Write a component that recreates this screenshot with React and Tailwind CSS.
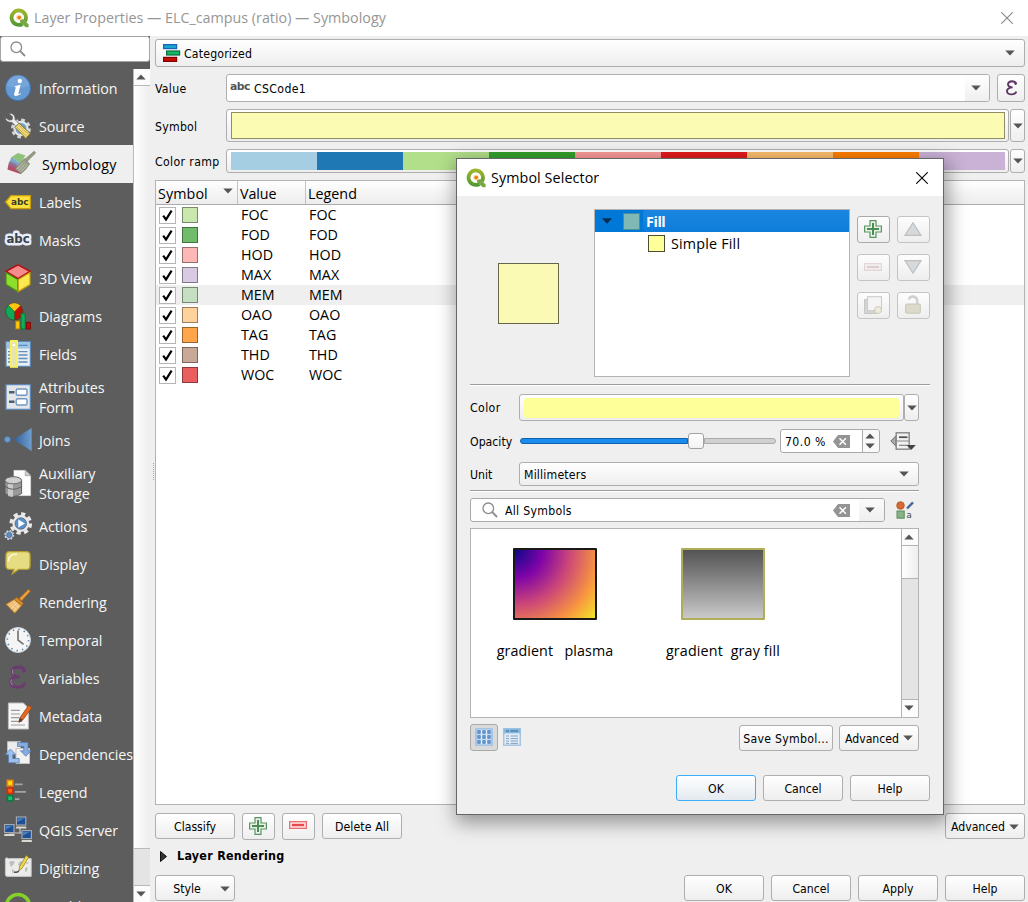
import React from "react";

const BTN = "border border-[#aeaeae] rounded-[3px] bg-gradient-to-b from-white to-[#eeeeee]";

function Arrow({ up, className = "" }) {
  return (
    <svg width="10" height="6" viewBox="0 0 10 6" className={"shrink-0 " + className}>
      <path d={up ? "M0.3 5.5 L5 0.5 L9.7 5.5 Z" : "M0.3 0.5 L5 5.5 L9.7 0.5 Z"} fill="#555" />
    </svg>
  );
}

function Button({ children, className = "w-20", primary }) {
  const look = primary
    ? "border border-[#3daefd] rounded-[3px] bg-gradient-to-b from-white to-[#e4eaf0]"
    : BTN;
  return (
    <button className={"flex h-[26px] shrink-0 items-center justify-center pt-[3px] whitespace-nowrap " + look + " " + className}>
      {children}
    </button>
  );
}

function DropButton({ className }) {
  return (
    <div className={"flex w-[15px] shrink-0 items-center justify-center " + BTN + " " + className}>
      <Arrow />
    </div>
  );
}

function QLogo() {
  return (
    <svg width="20" height="20" viewBox="0 0 20 20" className="shrink-0">
      <defs>
        <linearGradient id="qg" x1="0" y1="0" x2="0" y2="1">
          <stop offset="0" stopColor="#9cb62c" />
          <stop offset="1" stopColor="#539a33" />
        </linearGradient>
      </defs>
      <path d="M10 2.3a7.3 7.3 0 1 0 3.4 13.7M16 13.2A7.3 7.3 0 0 0 10 2.3" fill="none" stroke="url(#qg)" strokeWidth="3.8" />
      <path d="M11 11.2h3.6l5 5.2v2.8h-2.9l-5.7-5.3z" fill="#76a843" />
      <circle cx="10" cy="9.6" r="3" fill="#fadfb0" />
      <circle cx="10.2" cy="9.6" r="1.8" fill="#ee7913" />
    </svg>
  );
}

function Magnifier() {
  return (
    <svg width="16" height="16" viewBox="0 0 16 16" fill="none" stroke="#8c8c8c" className="shrink-0">
      <circle cx="6.3" cy="6.3" r="5.3" strokeWidth="1.3" />
      <path d="M10.2 10.2 L15 15" strokeWidth="1.9" />
    </svg>
  );
}

function PlusIcon() {
  return (
    <svg width="18" height="18" viewBox="0 0 18 18">
      <path d="M6 .6h6V6h5.4v6H12v5.4H6V12H.6V6H6z" fill="#e8f2e8" stroke="#5a9560" strokeWidth="1.2" />
      <path d="M9 3v12M3 9h12" stroke="#4c8c50" strokeWidth="2" />
    </svg>
  );
}

function MinusIcon({ faded }) {
  return (
    <svg width="18" height="8" viewBox="0 0 18 8" className={faded ? "opacity-25 grayscale-[60%]" : ""}>
      <rect x=".6" y=".6" width="16.8" height="6.8" fill="#fbd9d9" stroke="#ef6a6d" strokeWidth="1.2" />
      <path d="M3 4h12" stroke="#e8474c" strokeWidth="2.2" />
    </svg>
  );
}

function ClearIcon() {
  return (
    <svg width="17" height="13" viewBox="0 0 17 13" className="shrink-0">
      <path d="M5 0h12v13H5L0 6.5z" fill="#949494" />
      <path d="M6.5 3.2l6.4 6.6M12.9 3.2L6.5 9.8" stroke="#fff" strokeWidth="1.5" />
    </svg>
  );
}

function Gear({ cx, cy, r, fill = "#e9e9e9" }) {
  return (
    <g>
      <circle cx={cx} cy={cy} r={r} fill="none" stroke={fill} strokeWidth={r * 0.36} strokeDasharray={`${r * 0.43} ${r * 0.355}`} />
      <circle cx={cx} cy={cy} r={r * 0.88} fill={fill} />
      <circle cx={cx} cy={cy} r={r * 0.6} fill="#5b8fcc" stroke="#566573" strokeWidth=".8" />
    </g>
  );
}

const icons = {
  info: (
    <>
      <circle cx="14" cy="14" r="12.7" fill="#659ad2" stroke="#3f6fab" />
      <path d="M3 12a11 11 0 0 1 22 0q-10 4-22 0z" fill="#88b2df" opacity=".5" />
      <circle cx="15.8" cy="7" r="2.2" fill="#fff" />
      <path d="M10.4 12.6q3-1.2 6.2-1.8l-2.2 8.6q-.2 1.3 2.2-.3l.2.8q-6 4-6.7.6 0-.8 1.7-7z" fill="#fff" />
    </>
  ),
  source: (
    <>
      <circle cx="17" cy="16.5" r="8.6" fill="none" stroke="#d5d8da" strokeWidth="2.6" strokeDasharray="3.6 3.15" />
      <circle cx="17" cy="16.5" r="6.6" fill="#6fa0d0" stroke="#e4e4e4" strokeWidth="2.2" />
      <path d="M4.6 1.2l4 3.6-.5 2.9-3 .4-3.9-2.6Q1.8 10.8 8 10.4l4.4 4.6 3-3-4.2-4.2Q11.4.6 4.6 1.2z" fill="#ececec" stroke="#5b5b5b" strokeWidth=".7" />
      <path d="M11 15.4l4-4.2 11.2 10.2-4.2 5z" fill="#f0da80" stroke="#8a7426" />
      <path d="M13.2 15.4l9.6 9M15 13.4l9.6 9" stroke="#c7a942" strokeWidth=".9" />
    </>
  ),
  symbology: (
    <>
      <path d="M4.5 7L11 3l7.5 2.6-5 8z" fill="#8fc27c" />
      <path d="M4.5 7l9 6.6-2 3L2 13z" fill="#7fa9c8" />
      <path d="M2 12.4l9.6 4 3.6 6.2L13.5 24 .4 19.6z" fill="#b34f68" />
      <path d="M2.6 11l7.5 3-2 3.8L1.4 16z" fill="#8d6f9c" opacity=".7" />
      <path d="M27.2 1.3L17.8 9.5l2.2 2L28.5 3z" fill="#9a9d86" stroke="#77795f" strokeWidth=".7" />
      <path d="M17.4 8.8l5.2 5-4 5.7-4.6 4L8 18.6l4.4-4.3z" fill="#9ba08c" stroke="#7c806f" strokeWidth=".8" />
      <path d="M15.4 12.7l-5.5 6.6M17.8 14l-6 7M20.5 14.8l-6.5 7" stroke="#c3c6b5" strokeWidth=".8" />
    </>
  ),
  labels: (
    <>
      <path d="M7 7.6h19.4v13H7L1.6 14z" fill="#fbdf3a" stroke="#c89f0e" strokeWidth="1.3" />
      <text x="15.8" y="17.4" textAnchor="middle" fontFamily="DejaVu Sans" fontWeight="700" fontSize="9.3" textLength="17.5" lengthAdjust="spacingAndGlyphs" fill="#3b3a2c">abc</text>
    </>
  ),
  masks: (
    <text x="14" y="17" textAnchor="middle" fontFamily="DejaVu Sans" fontWeight="700" fontSize="12.5" textLength="23" lengthAdjust="spacingAndGlyphs" fill="#3b4248" stroke="#e8edfb" strokeWidth="5" strokeLinejoin="round" paintOrder="stroke">abc</text>
  ),
  view3d: (
    <>
      <path d="M14 .8L26 7.4 14 14.6 2 7.4z" fill="#f58b8b" stroke="#b30d12" strokeWidth="1.5" />
      <path d="M2 8.6l11.6 7v12L2 20.6z" fill="#8be02c" stroke="#4c8a13" strokeWidth="1.2" />
      <path d="M26 8.6l-11.8 7v12L26 20.6z" fill="#fce94f" stroke="#c39d12" strokeWidth="1.2" />
    </>
  ),
  diagrams: (
    <>
      <circle cx="10.4" cy="9.6" r="8.4" fill="#c40d02" stroke="#4a3a1a" strokeWidth=".9" />
      <path d="M10.4 9.6L4.4 3.6a8.4 8.4 0 0 1 12 0z" fill="#fdc60a" />
      <path d="M10.4 9.6l-6-6a8.4 8.4 0 0 0 6 14.4z" fill="#0fa958" stroke="#0a6b38" strokeWidth=".6" />
      <rect x="11.6" y="19" width="4.2" height="8" fill="#fdc60a" stroke="#a97b08" />
      <rect x="17" y="11.6" width="4.2" height="15.4" fill="#12ab59" stroke="#08753b" />
      <rect x="22.4" y="20.4" width="4" height="6.6" fill="#c40d02" stroke="#7b0a0a" />
    </>
  ),
  fields: (
    <>
      <rect x="2" y="1.6" width="24.4" height="24.8" fill="#eceff1" stroke="#5d87b4" strokeWidth="1.3" />
      <rect x="2.6" y="2.2" width="23.2" height="6.4" fill="#9cc4e4" />
      <path d="M14.5 5.3h9M14.5 11.6h9M14.5 15h9M14.5 18.5h9M14.5 22h9M4 11.6h2M4 15h2M4 18.5h2M4 22h2" stroke="#5f8fbd" strokeWidth="1.3" />
      <rect x="6.9" y=".9" width="6.2" height="26" fill="#e8e3b5" stroke="#f8f25a" strokeWidth="1.8" />
      <circle cx="10" cy="5" r="1.3" fill="#fff" />
    </>
  ),
  form: (
    <>
      <rect x="2" y="1.6" width="24.4" height="24.8" fill="#e4e6e8" stroke="#5d87b4" strokeWidth="1.3" />
      <path d="M5 9.2h5.5M5 18.8h5.5" stroke="#4b5d70" strokeWidth="2.6" />
      <rect x="12.2" y="6" width="10.8" height="6.2" rx="1.5" fill="#fff" stroke="#7097c2" strokeWidth="1.4" />
      <rect x="12.2" y="15.8" width="10.8" height="6.2" rx="1.5" fill="#fff" stroke="#7097c2" strokeWidth="1.4" />
    </>
  ),
  joins: (
    <>
      <defs>
        <linearGradient id="jg"><stop offset="0" stopColor="#2f5f98" /><stop offset="1" stopColor="#6f9fd0" /></linearGradient>
      </defs>
      <circle cx="3.4" cy="13.4" r="3" fill="#6c9ccf" stroke="#4673a5" strokeWidth=".7" />
      <path d="M27.6 2v23L9.6 13.4z" fill="url(#jg)" />
    </>
  ),
  storage: (
    <>
      <path d="M9.5 1h12l5.5 5.4V27h-17.5z" fill="#fdfdfd" stroke="#777" strokeWidth=".6" />
      <path d="M21.3 1v5.7H27z" fill="#d0d0d0" stroke="#777" strokeWidth=".5" />
      <path d="M1 11.5v13q8 6 16.6 0v-13z" fill="#999" stroke="#5e5e5e" />
      <path d="M4 12v15q3 1 5 1V12z" fill="#d6d6d6" opacity=".8" />
      <path d="M1 17.5q8.3 5.6 16.6 0" fill="none" stroke="#606060" />
      <ellipse cx="9.3" cy="11.3" rx="8.3" ry="3.6" fill="#cfcfcf" stroke="#666" />
    </>
  ),
  actions: (
    <>
      <Gear cx={16.8} cy={11.5} r={9.6} />
      <path d="M14.3 7.5l6.6 4-6.6 4z" fill="#fff" />
      <Gear cx={5.2} cy={23} r={4.2} fill="#c4d6e8" />
    </>
  ),
  display: (
    <>
      <path d="M5.5 1.6h17q3.6 0 3.6 4v9.8q0 4-3.6 4h-8l-6.2 4.4 1.6-4.4H5.5q-3.6 0-3.6-4V5.6q0-4 3.6-4z" fill="#e6dc82" stroke="#b49e2f" strokeWidth="1.3" />
      <path d="M4.4 11.5Q4 4.4 13 4" fill="none" stroke="#fcf9dc" strokeWidth="1.7" />
    </>
  ),
  rendering: (
    <>
      <path d="M24.4 1.4l2 1.7-8.8 9.8-2.5-2.3z" fill="#eca040" stroke="#b26d15" />
      <path d="M12.8 9.4l6.6 6-1.8 2.2-7.4-6.3z" fill="#d98d29" stroke="#a8640f" strokeWidth=".8" />
      <path d="M10.2 11.4l7.4 6.3-6.8 7.5-8.8-8.9z" fill="#edbd74" stroke="#b17322" />
      <path d="M6 16l6.5 6M8.5 13.5l6.5 6M13 14.6l-6.2 6.6M15.4 17L9.5 23.4" stroke="#fbe0b0" strokeWidth=".7" />
    </>
  ),
  temporal: (
    <>
      <circle cx="14" cy="14" r="12.5" fill="#f5f5f5" stroke="#d1d6da" />
      <circle cx="14" cy="14" r="10.6" fill="none" stroke="#5b88b8" strokeWidth="1.6" strokeDasharray="1.4 4.15" />
      <path d="M14 4.6V14l5.6 4.4" fill="none" stroke="#777" strokeWidth="1.7" />
    </>
  ),
  variables: (
    <>
      <path d="M20.6 6.6Q19 3 14.6 3 8 3.4 8.2 8q.4 4.4 7.2 4.8Q6.4 13 6.4 18.2q.4 5 7.6 5 5 0 7-4.4" fill="none" stroke="#6a3a71" strokeWidth="2.8" />
      <circle cx="20" cy="6.8" r="1.9" fill="#6a3a71" />
      <path d="M9 5.2Q7.6 8 9.4 10.4M7.4 15.4Q5.6 19 8.6 21.4" fill="none" stroke="#a883ae" strokeWidth="1" />
    </>
  ),
  metadata: (
    <>
      <path d="M4.4 1h15l5 5v21h-20z" fill="#f6f6f6" stroke="#c0c0c0" />
      <path d="M7 8.3h9M7 12h9M7 15.6h8M7 19.4h11M7 23h14" stroke="#9c9c9c" strokeWidth="1.2" />
      <path d="M24.7 3.2l3 2.6-9 12.3-3.8 2.3 1-4.6z" fill="#e06a24" stroke="#a23f0b" strokeWidth=".8" />
      <path d="M16 15.8l2.6 2.2-3.7 2.4z" fill="#4b3b33" />
    </>
  ),
  dependencies: (
    <>
      <path d="M3.5 1.6h13v13h-13z" fill="#ececec" stroke="#bcbcbc" />
      <path d="M12 8.5h13.5v15H12z" fill="#f1f1f1" stroke="#c3c3c3" />
      <path d="M13.5 2.5H24v8.3h3l-5.2 5.5-5.4-5.5h3.3V6.5h-6.2z" fill="#85abdf" stroke="#4e7cba" strokeWidth=".7" />
      <path d="M15.2 22.8H4.5v-8.3H1.2L6.4 9l5.4 5.5h-3v4h6.4z" fill="#9dbfe9" stroke="#4e7cba" strokeWidth=".7" />
    </>
  ),
  legend: (
    <>
      <rect x="3.4" y="2.4" width="5.4" height="5.4" fill="#fcdc12" stroke="#f28b0b" strokeWidth="1.6" />
      <rect x="3.4" y="10" width="5.4" height="5.4" fill="#ff6412" stroke="#d62b04" strokeWidth="1.6" />
      <rect x="3.4" y="17.6" width="5.4" height="5.2" fill="#1ac06b" stroke="#087e3f" strokeWidth="1.6" />
      <path d="M11 6.3h7.6M11 13.8h11M11 21.2h4.4" stroke="#a4a4a4" strokeWidth="1.8" />
    </>
  ),
  server: (
    <>
      <path d="M5 17h21M16 11v6" stroke="#c8c8c8" strokeWidth="1.2" />
      {[[12.4, 1], [0.6, 8.6], [18, 14.6]].map(([x, y]) => (
        <g key={x}>
          <rect x={x} y={y} width="9.4" height="8" fill="#1f4f96" stroke="#a9aeb4" strokeWidth="1.1" />
          <path d={`M${x + 1} ${y + 1.2}h7l-7 4z`} fill="#4a7dbb" />
          <path d={`M${x} ${y + 9.4}h9.6l.6 2h-10.8z`} fill="#d9d9d2" />
        </g>
      ))}
    </>
  ),
  digitizing: (
    <>
      <path d="M1.4 4.6q1.6-1.5 3 0h22.8v17.8H4q-2.6.6-2.6-2z" fill="#ececea" stroke="#c7c7c7" />
      <path d="M5 8q4-2 6 0l-2 3-2 2zM8 15l2 1-1 4-1-2zM15 8l3-1 1 3-3 3-2-2zM21 14l3-1-1 4-2 1zM22 8l3 .5-2 2z" fill="#bdbfbd" />
      <path d="M22.2 1.6l2.4 1.7-6.6 11-3 2 .6-3.6z" fill="#f0d94f" stroke="#9a8620" strokeWidth=".8" />
      <path d="M10 18q4 1 5-1.6" fill="none" stroke="#4a4a4a" strokeWidth="1.4" />
    </>
  ),
  qfield: <circle cx="14" cy="14" r="11.5" fill="none" stroke="#86d02c" strokeWidth="3.6" />,
};

const menu = [
  ["info", "Information"],
  ["source", "Source"],
  ["symbology", "Symbology"],
  ["labels", "Labels"],
  ["masks", "Masks"],
  ["view3d", "3D View"],
  ["diagrams", "Diagrams"],
  ["fields", "Fields"],
  ["form", "Attributes Form"],
  ["joins", "Joins"],
  ["storage", "Auxiliary Storage"],
  ["actions", "Actions"],
  ["display", "Display"],
  ["rendering", "Rendering"],
  ["temporal", "Temporal"],
  ["variables", "Variables"],
  ["metadata", "Metadata"],
  ["dependencies", "Dependencies"],
  ["legend", "Legend"],
  ["server", "QGIS Server"],
  ["digitizing", "Digitizing"],
  ["qfield", "QField"],
];

const UI = "font-['Open_Sans','Noto_Sans',sans-serif] text-[14.3px] [font-stretch:normal]";

function Sidebar() {
  return (
    <aside className="flex w-[150px] shrink-0 flex-col bg-[#5d5d5d]">
      <div className="flex h-[26px] shrink-0 items-center rounded-[3px] border border-[#a6a6a6] bg-white pl-[9px]">
        <Magnifier />
      </div>
      <div className="mt-[7px] flex min-h-0 flex-1">
        <nav className={"w-[133px] overflow-hidden text-[#f6f6f6] " + UI}>
          {menu.map(([icon, label]) => {
            const two = icon === "form" || icon === "storage";
            const on = icon === "symbology";
            return (
              <div
                key={icon}
                className={
                  "flex items-center gap-[7px] " +
                  (two ? "h-12 " : "h-[38px] ") +
                  (on ? "bg-[#efefef] pl-[7px] tracking-[0.22px] text-black" : "pl-1 tracking-[-0.07px]")
                }
              >
                <svg width="28" height="28" viewBox="0 0 28 28" className="shrink-0 overflow-visible">
                  {icons[icon]}
                </svg>
                <span className={"pt-0.5 leading-5 " + (two ? "w-20" : "whitespace-nowrap")}>{label}</span>
              </div>
            );
          })}
        </nav>
        <div className="flex w-[17px] flex-col border-l border-[#b9b9b9]">
          <div className="flex h-[17px] shrink-0 items-center justify-center border-b border-[#b9b9b9] bg-[#fcfcfc] pr-0.5">
            <Arrow up />
          </div>
          <div className="h-[763px] shrink-0 border-b border-[#b9b9b9] bg-gradient-to-r from-white to-[#ededed]" />
          <div className="h-[37px] shrink-0 border-b border-[#b9b9b9] bg-[#e4e4e4]" />
          <div className="flex flex-1 items-center justify-center bg-[#fcfcfc] pr-0.5">
            <Arrow />
          </div>
        </div>
      </div>
    </aside>
  );
}

const ramp = [
  "bg-[#a6cee3]", "bg-[#1f78b4]", "bg-[#b2df8a]", "bg-[#33a02c]", "bg-[#fb9a99]",
  "bg-[#e31a1c]", "bg-[#fdbf6f]", "bg-[#ff7f00]", "bg-[#cab2d6]",
];

const rows = [
  ["FOC", "bg-[#c9e8ae]"],
  ["FOD", "bg-[#70bc6b]"],
  ["HOD", "bg-[#fcb8b7]"],
  ["MAX", "bg-[#d9cae3]"],
  ["MEM", "bg-[#c5dfc1]"],
  ["OAO", "bg-[#fdd29b]"],
  ["TAG", "bg-[#ffa64c]"],
  ["THD", "bg-[#c8a998]"],
  ["WOC", "bg-[#eb5e60]"],
];

function ClassTable() {
  return (
    <div className={"mt-[7px] flex h-[625px] shrink-0 flex-col border border-[#b3b3b3] bg-white " + UI}>
      <div className="flex h-6 shrink-0 border-b border-[#ababab] bg-gradient-to-b from-white to-[#ececec]">
        <div className="flex w-[82px] items-center border-r border-[#c3c3c3] pl-0.5 pt-0.5">
          <span className="tracking-[0.1px]">Symbol</span>
          <Arrow className="mb-1.5 ml-auto mr-1" />
        </div>
        <div className="flex w-[68px] items-center border-r border-[#c3c3c3] pl-[2px] pt-0.5 tracking-[-0.1px]">Value</div>
        <div className="flex items-center pl-0.5 pt-0.5 tracking-[0.02px]">Legend</div>
      </div>
      {rows.map(([name, color]) => (
        <div key={name} className={"flex h-5 shrink-0 items-center " + (name === "MEM" ? "bg-[#efefef]" : "")}>
          <div className="ml-[3px] flex size-[17px] items-center justify-center border border-[#b5b5b5] bg-white">
            <svg width="13" height="13" viewBox="0 0 13 13">
              <path d="M2.2 6.6L5 10.6 10.6 1.6" fill="none" stroke="#000" strokeWidth="2.2" />
            </svg>
          </div>
          <div className={"ml-[6px] size-4 border border-black/40 " + color} />
          <span className="ml-[43px] w-[68px]">{name}</span>
          <span>{name}</span>
        </div>
      ))}
    </div>
  );
}

function MainPanel() {
  return (
    <main className="flex w-[870px] shrink-0 flex-col">
      <div className={"mt-[3px] flex h-7 shrink-0 items-center pl-[7px] pr-[9px] " + BTN}>
        <svg width="18" height="18" viewBox="0 0 18 18">
          <rect x=".6" y=".6" width="13" height="4" fill="#16a4d0" stroke="#1764b5" strokeWidth="1.2" />
          <rect x="3.6" y="7" width="13" height="4" fill="#10b868" stroke="#0a6f3d" strokeWidth="1.2" />
          <rect x=".6" y="13.4" width="13" height="4" fill="#c40d02" stroke="#820000" strokeWidth="1.2" />
        </svg>
        <span className="ml-[3px] pt-0.5 tracking-[0.18px]">Categorized</span>
        <Arrow className="ml-auto" />
      </div>
      <div className="mt-[7px] flex h-7 shrink-0 items-center">
        <span className="w-[71px] pt-0.5 tracking-[0.3px]">Value</span>
        <div className="flex h-7 w-[764px] items-center overflow-hidden rounded-[3px] border border-[#aeaeae] bg-white">
          <span className="ml-[3px] w-[24px] pb-px font-['DejaVu_Sans'] text-[10.8px] font-bold tracking-[-0.5px] text-[#555] [font-stretch:normal]">abc</span>
          <span className="pt-0.5 tracking-[0.36px]">CSCode1</span>
          <div className="ml-auto flex h-full w-[24px] items-center justify-center bg-gradient-to-b from-white to-[#efefef]">
            <Arrow className="mr-[3px]" />
          </div>
        </div>
        <div className={"ml-[7px] flex h-7 w-7 items-center justify-center " + BTN}>
          <svg width="13" height="16" viewBox="0 0 13 16">
            <path d="M11 3.4Q10 1.2 7.2 1.2 3 1.4 3 4.4q.2 2.8 4.6 3Q2 7.8 2 11.2q.2 3.2 4.8 3.2 3.2 0 4.6-2.8" fill="none" stroke="#5f3566" strokeWidth="1.9" />
            <circle cx="10.6" cy="3.6" r="1.3" fill="#5f3566" />
          </svg>
        </div>
      </div>
      <div className="mt-[7px] flex h-[33px] shrink-0 items-center">
        <span className="w-[71px] pt-[3px] tracking-[0.25px]">Symbol</span>
        <div className={"flex h-[33px] w-[783px] items-center justify-center " + BTN}>
          <div className="h-[27px] w-[774px] border border-[#8f8f66] bg-[#fcfbb4]" />
        </div>
        <DropButton className="ml-px h-[33px]" />
      </div>
      <div className="mt-[7px] flex h-6 shrink-0 items-center">
        <span className="w-[71px] whitespace-nowrap pt-0.5 tracking-[0.36px]">Color ramp</span>
        <div className={"flex h-6 w-[783px] items-center justify-center " + BTN}>
          {ramp.map((c) => (
            <div key={c} className={"h-[18px] w-[86px] " + c} />
          ))}
        </div>
        <DropButton className="ml-px h-6" />
      </div>
      <ClassTable />
      <div className="mt-[7px] flex h-7 shrink-0 items-center gap-[7px]">
        <Button>Classify</Button>
        <div className={"flex h-[27px] w-[33px] items-center justify-center pb-px pr-px " + BTN}><PlusIcon /></div>
        <div className={"flex h-[27px] w-[33px] items-center justify-center pb-0.5 pr-px " + BTN}><MinusIcon /></div>
        <Button className="w-20 tracking-[0.1px]">Delete All</Button>
        <Button className="ml-auto w-20 gap-1">Advanced <Arrow className="mb-0.5" /></Button>
      </div>
      <div className="mt-[6px] flex h-5 shrink-0 items-center pl-[5px] text-[12.4px] font-bold">
        <svg width="7" height="11" viewBox="0 0 7 11"><path d="M.5.5L6.5 5.5.5 10.5z" fill="#333" stroke="#111" /></svg>
        <span className="ml-[10px] tracking-[0.28px]">Layer Rendering</span>
      </div>
      <div className="mt-[9px] flex shrink-0 gap-[7px]">
        <Button className="mr-auto w-20 pl-[13px]">Style <Arrow className="mb-0.5 ml-[19px]" /></Button>
        <Button>OK</Button>
        <Button>Cancel</Button>
        <Button>Apply</Button>
        <Button>Help</Button>
      </div>
    </main>
  );
}

function ToolButton({ children, disabled }) {
  return (
    <div
      className={
        "flex h-[27px] w-[33px] items-center justify-center rounded-[3px] border bg-gradient-to-b from-[#fdfdfd] to-[#eeeeee] pb-0.5 pr-0.5 " +
        (disabled ? "border-[#c4c4c4]" : "border-[#aaaaaa]")
      }
    >
      {children}
    </div>
  );
}

function SymbolDialog() {
  return (
    <section className="absolute left-[456px] top-[158px] flex h-[657px] w-[488px] flex-col border border-[#666] bg-[#efefef] shadow-[2px_6px_18px_2px_rgba(0,0,0,0.38)]">
      <header className={"flex h-[37px] shrink-0 items-center bg-white pl-[9px] pr-[15px] " + UI}>
        <QLogo />
        <span className="ml-[5px] tracking-[0.1px]">Symbol Selector</span>
        <svg width="12" height="12" viewBox="0 0 12 12" className="ml-auto">
          <path d="M.3.3l11.4 11.4M11.7.3L.3 11.7" stroke="#000" strokeWidth="1.1" />
        </svg>
      </header>
      <div className="mt-[13px] flex h-[168px] shrink-0">
        <div className="flex w-[137px] items-center pl-[41px]">
          <div className="size-[61px] border border-[#66664d] bg-[#fbfab4]" />
        </div>
        <div className={"flex w-[256px] flex-col border border-[#b3b3b3] bg-white " + UI}>
          <div className="flex h-[22px] items-center bg-[#0078d7]">
            <svg width="10" height="6" viewBox="0 0 10 6" className="ml-[7px]"><path d="M0 .3h10L5 5.7z" fill="#0b2c4d" /></svg>
            <div className="ml-[11px] size-[17px] border border-[#4c8d9b] bg-[#80b8b6]" />
            <div className="ml-[3px] flex h-full flex-1 items-center rounded-l-sm bg-gradient-to-b from-[#1a86e0] to-[#0d7cda] pl-[3px] pt-0.5 font-bold tracking-[-0.4px] text-white">Fill</div>
          </div>
          <div className="flex h-[22px] items-center">
            <div className="ml-[53px] size-[17px] border border-[#4d4d33] bg-[#ffff99]" />
            <span className="ml-[6px] pt-0.5 tracking-[0.2px]">Simple Fill</span>
          </div>
        </div>
        <div className="ml-[7px] mt-[7px] grid h-[103px] grid-cols-2 gap-x-[7px] gap-y-[11px]">
          <ToolButton><PlusIcon /></ToolButton>
          <ToolButton disabled>
            <svg width="18" height="14" viewBox="0 0 18 14"><path d="M9 .8L17 13.3H1z" fill="#d5d9dc" stroke="#bdbfc0" strokeWidth="1.2" /></svg>
          </ToolButton>
          <ToolButton disabled><MinusIcon faded /></ToolButton>
          <ToolButton disabled>
            <svg width="18" height="14" viewBox="0 0 18 14"><path d="M9 13.2L1 .7h16z" fill="#d5d9dc" stroke="#bdbfc0" strokeWidth="1.2" /></svg>
          </ToolButton>
          <ToolButton disabled>
            <svg width="18" height="18" viewBox="0 0 18 18">
              <path d="M.5 3.5h3v11h9v3H.5z" fill="#d5d5d5" stroke="#c5c5c5" />
              <rect x="3.5" y=".7" width="14" height="14" fill="#f4f4f4" stroke="#c9c9c9" />
              <circle cx="14" cy="14" r="3.5" fill="#ecebd9" stroke="#cfcbb5" />
            </svg>
          </ToolButton>
          <ToolButton disabled>
            <svg width="16" height="19" viewBox="0 0 16 19">
              <path d="M4 4.5q.6-3 4-3t4.2 3.6V9" fill="none" stroke="#cfcfcf" strokeWidth="2.4" />
              <rect x=".7" y="9" width="14.6" height="9.2" rx="1" fill="#dcd9cd" stroke="#cac6b4" />
            </svg>
          </ToolButton>
        </div>
      </div>
      <div className="ml-[13px] mt-[7px] h-[2px] w-[460px] shrink-0 border-b border-white bg-[#9c9c9c]" />
      <div className="flex flex-col pl-[13px] pr-6">
        <div className="mt-[8px] flex h-[27px] items-center">
          <span className="w-[49px] pt-0.5 tracking-[0.4px]">Color</span>
          <div className={"flex h-[27px] w-[385px] items-center justify-center " + BTN}>
            <div className="h-5 w-[375px] rounded-[3px] bg-[#ffff99]" />
          </div>
          <DropButton className="h-[27px]" />
        </div>
        <div className="mt-[8px] flex h-6 items-center">
          <span className="w-[50px] pt-0.5">Opacity</span>
          <div className="flex w-[256px] items-center">
            <div className="h-1.5 w-[168px] rounded-l-sm border border-[#0f62ab] bg-[#1a8cf0]" />
            <div className="size-4 shrink-0 rounded-[3px] border border-[#a2a2a2] bg-gradient-to-b from-white to-[#f3f3f3]" />
            <div className="h-1.5 flex-1 rounded-r-sm border border-[#aaa] bg-[#d0d0d0]" />
          </div>
          <div className="ml-1 flex h-6 w-[100px] items-center rounded-[3px] border border-[#aaa] bg-white">
            <span className="ml-1 w-[48px] whitespace-nowrap pt-0.5 tracking-[0.4px]">70.0 %</span>
            <ClearIcon />
            <div className="ml-auto flex h-full w-[17px] flex-col items-center justify-center gap-1 rounded-r-[3px] border-l border-[#aaa] bg-[#f9f9f9] pr-0.5">
              <Arrow up />
              <Arrow />
            </div>
          </div>
          <svg width="26" height="19" viewBox="0 0 26 19" className="ml-[10px] shrink-0">
            <path d="M6 3.8v10.4L.8 9z" fill="#a9adb1" stroke="#6a6a6a" />
            <rect x="6.2" y=".8" width="13" height="16.4" fill="#f1f1f1" stroke="#858585" strokeWidth="1.4" />
            <path d="M9 5.2h8.5" stroke="#555" strokeWidth="1.8" />
            <path d="M6.5 9h12.5M9 13.4h8.5" stroke="#888" strokeWidth="1.2" />
            <path d="M16.5 13h9.3l-4.6 5z" fill="#444" />
          </svg>
        </div>
        <div className="mt-[9px] flex h-6 items-center">
          <span className="w-[49px] pt-0.5">Unit</span>
          <div className={"flex h-6 w-[400px] items-center pl-1 pr-[9px] " + BTN}>
            <span className="pt-0.5 tracking-[0.18px]">Millimeters</span>
            <Arrow className="ml-auto" />
          </div>
        </div>
        <div className="mt-1 h-[2px] w-[449px] border-b border-white bg-[#9c9c9c]" />
        <div className="mt-[6px] flex h-6 items-center">
          <div className="flex h-6 w-[415px] items-center overflow-hidden rounded-[3px] border border-[#aaa] bg-white pl-[11px]">
            <Magnifier />
            <span className="ml-[7px] pt-0.5 tracking-[0.28px]">All Symbols</span>
            <span className="ml-auto mr-[9px] flex"><ClearIcon /></span>
            <div className="flex h-full w-[25px] items-center bg-gradient-to-b from-[#fafafa] to-[#efefef] pl-[6px]"><Arrow /></div>
          </div>
          <svg width="18" height="18" viewBox="0 0 18 18" className="ml-[11px]">
            <circle cx="4.5" cy="4.5" r="3.8" fill="#d66a32" stroke="#af5020" strokeWidth=".8" />
            <path d="M11 7.5L17 1.3" stroke="#46699b" strokeWidth="2.4" />
            <rect x="1" y="10" width="7.2" height="7.2" fill="#88b288" stroke="#5c8b61" />
            <text x="10.6" y="17" fontFamily="DejaVu Sans" fontSize="9.5" fill="#444">a</text>
          </svg>
        </div>
        <div className="mt-[6px] flex h-[190px] w-[449px] border border-[#b3b3b3] bg-white">
          <div className={"flex flex-1 whitespace-pre " + UI}>
            <figure className="flex w-[168px] flex-col items-center pt-[19px]">
              <div className="h-[72px] w-[84px] rounded-[1px] border-2 border-[#191919] bg-[radial-gradient(circle_110px_at_0_0,#0d0887_0%,#7e03a8_25%,#cc4778_50%,#f89540_75%,#f0f921_100%)]" />
              <figcaption className="mt-[20px] tracking-[0.08px]">gradient   plasma</figcaption>
            </figure>
            <figure className="flex w-[168px] flex-col items-center pt-[19px]">
              <div className="h-[72px] w-[84px] rounded-[1px] border-2 border-[#aead58] bg-gradient-to-b from-[#545454] to-[#cacaca]" />
              <figcaption className="mt-[20px] tracking-[0.15px]">gradient  gray fill</figcaption>
            </figure>
          </div>
          <div className="flex w-[17px] flex-col border-l border-[#b3b3b3] bg-[#e4e4e4]">
            <div className="flex h-[17px] items-center justify-center border-b border-[#b3b3b3] bg-[#fcfcfc] pr-0.5"><Arrow up /></div>
            <div className="h-[33px] border-b border-[#b3b3b3] bg-gradient-to-r from-white to-[#eee]" />
            <div className="mt-auto flex h-[18px] items-center justify-center border-t border-[#b3b3b3] bg-[#fcfcfc] pb-px pr-0.5"><Arrow /></div>
          </div>
        </div>
        <div className="mt-[6px] flex h-[27px] w-[449px] items-center">
          <div className="flex h-[27px] w-7 items-center justify-center rounded-[3px] border border-[#aaa] bg-[#dadada] pb-px">
            <svg width="18" height="18" viewBox="0 0 18 18">
              <rect width="18" height="18" rx="1.5" fill="#a6c4e4" />
              <path d="M2 4h14M2 9h14M2 14h14" stroke="#e6eef7" strokeWidth="4.6" />
              {[4, 9, 14].map((y) => [4, 9, 14].map((x) => (
                <rect key={x + "-" + y} x={x - 1.9} y={y - 1.9} width="3.8" height="3.8" rx=".8" fill="#6796cc" />
              )))}
            </svg>
          </div>
          <svg width="18" height="18" viewBox="0 0 18 18" className="mb-px ml-[5px]">
            <rect x=".6" y=".6" width="16.8" height="16.8" fill="#e6edf4" stroke="#a5c5e2" strokeWidth="1.8" />
            <rect x=".6" y=".6" width="16.8" height="4.8" fill="#87b8de" />
            <path d="M3 3h3M7.5 3H15" stroke="#4c83b4" strokeWidth="1.4" />
            <path d="M3 8h3M7.5 8H15M3 10.6h3M7.5 10.6H15M3 13h3M7.5 13H15M3 15.4h3M7.5 15.4H15" stroke="#7da2c6" strokeWidth="1" />
          </svg>
          <Button className="ml-auto w-[94px] tracking-[0.28px]">Save Symbol...</Button>
          <Button className="ml-[6px] w-20 gap-1">Advanced <Arrow className="mb-0.5" /></Button>
        </div>
      </div>
      <div className="mt-[24px] flex justify-end gap-[7px] pr-[13px]">
        <Button primary>OK</Button>
        <Button>Cancel</Button>
        <Button>Help</Button>
      </div>
    </section>
  );
}

export default function App() {
  return (
    <div className="relative flex h-[902px] w-[1028px] flex-col overflow-hidden bg-[#efefef] font-['DejaVu_Sans_Condensed','DejaVu_Sans',sans-serif] text-[12.2px] leading-normal text-black [font-stretch:condensed]">
      <header className={"flex h-9 shrink-0 items-center bg-white pl-[9px] pr-[15px] text-[#969696] " + UI}>
        <QLogo />
        <span className="ml-[5px]">Layer Properties — ELC_campus (ratio) — Symbology</span>
        <svg width="12" height="12" viewBox="0 0 12 12" className="ml-auto">
          <path d="M.3.3l11.4 11.4M11.7.3L.3 11.7" stroke="#888" strokeWidth="1.1" />
        </svg>
      </header>
      <div className="flex min-h-0 flex-1">
        <Sidebar />
        <div className="flex w-[5px] shrink-0 justify-end pr-px pt-[427px]">
          <div className="h-[17px] border-l border-dotted border-[#a5a5a5]" />
        </div>
        <MainPanel />
      </div>
      <SymbolDialog />
    </div>
  );
}
